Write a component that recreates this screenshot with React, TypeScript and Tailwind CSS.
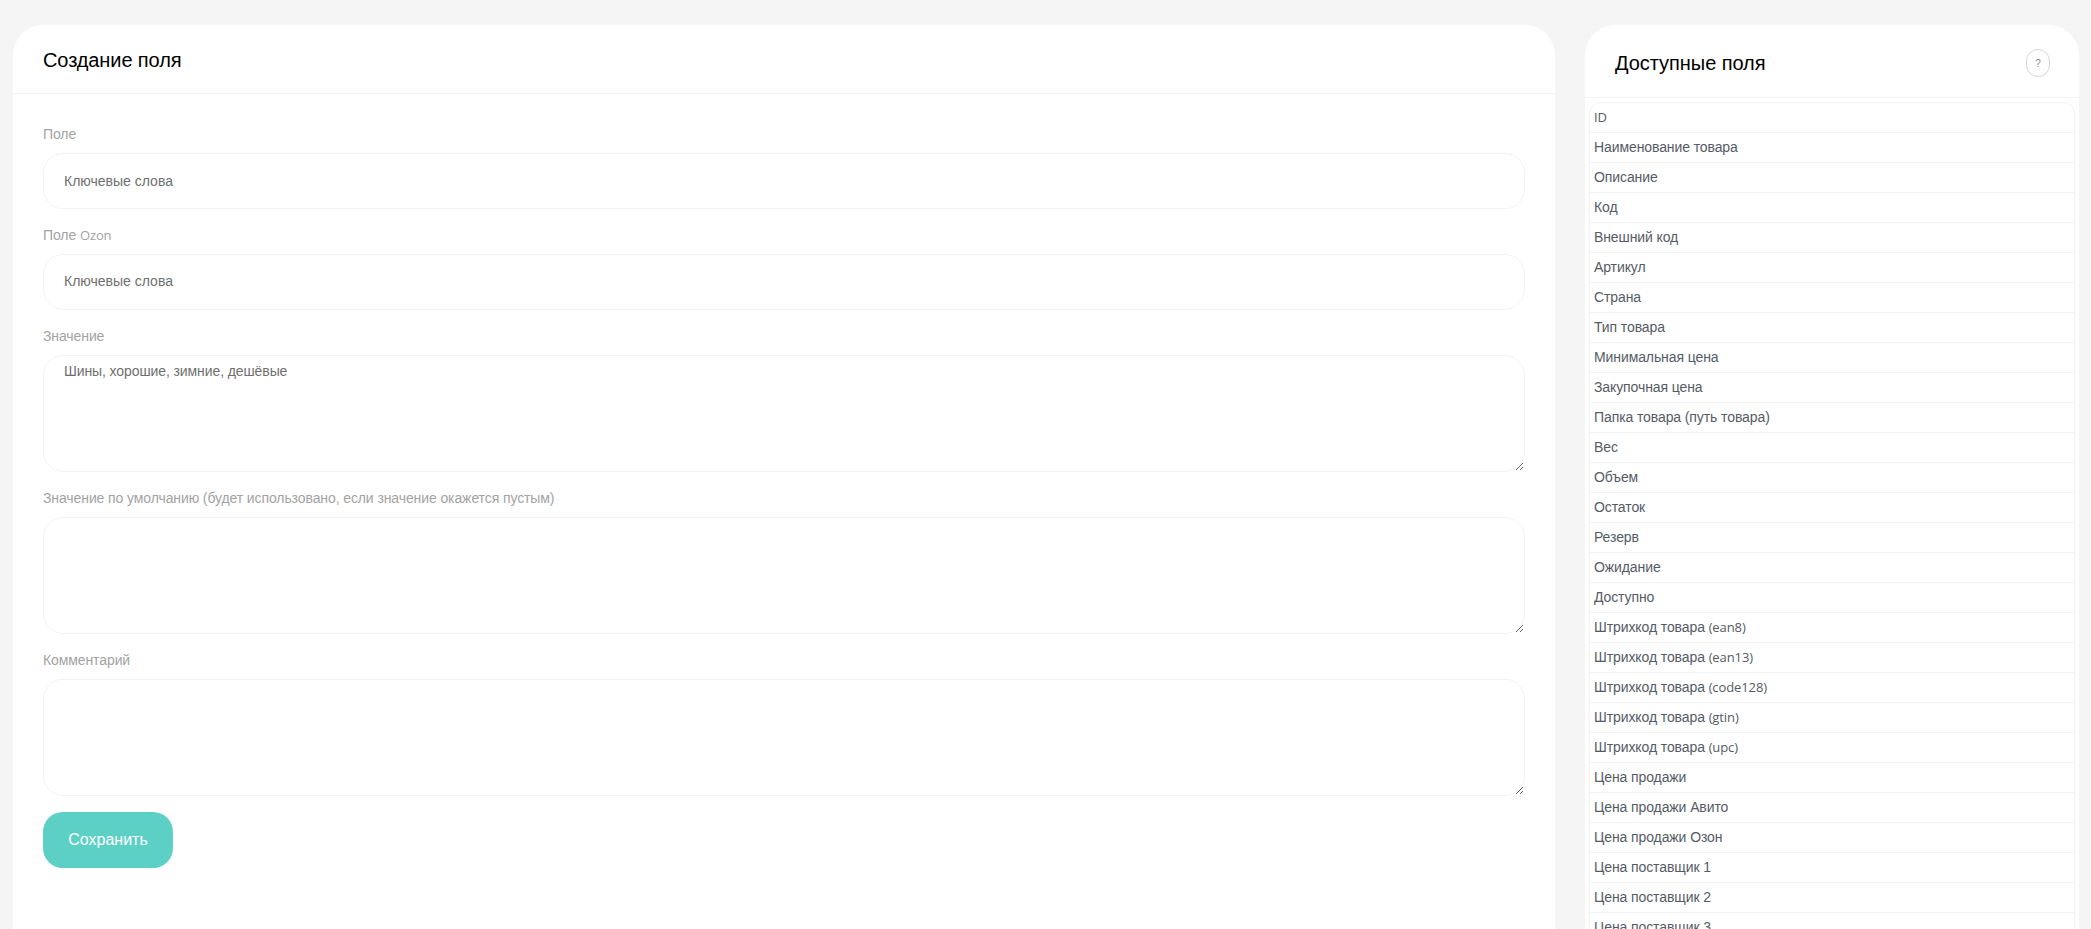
const fields: [string, string?][] = [
  ["", "ID"],
  ["Наименование товара"],
  ["Описание"],
  ["Код"],
  ["Внешний код"],
  ["Артикул"],
  ["Страна"],
  ["Тип товара"],
  ["Минимальная цена"],
  ["Закупочная цена"],
  ["Папка товара (путь товара)"],
  ["Вес"],
  ["Объем"],
  ["Остаток"],
  ["Резерв"],
  ["Ожидание"],
  ["Доступно"],
  ["Штрихкод товара ", "(ean8)"],
  ["Штрихкод товара ", "(ean13)"],
  ["Штрихкод товара ", "(code128)"],
  ["Штрихкод товара ", "(gtin)"],
  ["Штрихкод товара ", "(upc)"],
  ["Цена продажи"],
  ["Цена продажи Авито"],
  ["Цена продажи Озон"],
  ["Цена поставщик 1"],
  ["Цена поставщик 2"],
  ["Цена поставщик 3"],
];

function Label({ children }: { children: React.ReactNode }) {
  return (
    <label className="mb-[9px] block h-[20px] text-[14px] leading-[20px] tracking-[-0.1px] text-[#a3a3a3]">
      {children}
    </label>
  );
}

function Field({ label, value, inputClass }: { label: React.ReactNode; value: string; inputClass?: string }) {
  return (
    <div className="mb-[16px]">
      <Label>{label}</Label>
      <input
        readOnly
        value={value}
        className={`block h-[56px] w-full rounded-[20px] border border-[#f2f3f5] bg-white px-[20px] text-[14px] text-[#6f6f6f] outline-none ${inputClass ?? ""}`}
      />
    </div>
  );
}

function Area({ label, value, className }: { label: string; value?: string; className: string }) {
  return (
    <div className={className}>
      <Label>{label}</Label>
      <textarea
        readOnly
        value={value ?? ""}
        className="block h-[117px] w-full rounded-[20px] border border-[#f2f3f5] bg-white px-[20px] pt-[5px] text-[14px] leading-[20px] tracking-[-0.1px] text-[#6f6f6f] outline-none"
      />
    </div>
  );
}

export default function App() {
  return (
    <div className="flex h-[929px] items-start gap-[30px] overflow-hidden bg-[#f5f5f5] pt-[25px] pl-[13px] font-['Liberation_Sans',sans-serif]">
      {/* Создание поля */}
      <div className="min-h-[940px] w-[1542px] shrink-0 rounded-[30px] bg-white">
        <div className="flex h-[69px] items-center border-b border-[#f2f3f5] px-[30px] pt-[2px] text-[20px] tracking-[-0.1px] text-black">
          Создание поля
        </div>
        <div className="px-[30px] pt-[30px]">
          <Field label="Поле" value="Ключевые слова" />
          <Field
            label={
              <>
                Поле <span className="font-['Open_Sans',sans-serif] text-[13px]">Ozon</span>
              </>
            }
            value="Ключевые слова"
            inputClass="pb-[2px]"
          />
          <Area label="Значение" value="Шины, хорошие, зимние, дешёвые" className="mb-[16px]" />
          <Area
            label="Значение по умолчанию (будет использовано, если значение окажется пустым)"
            className="mb-[16px]"
          />
          <Area label="Комментарий" className="mb-[16px]" />
          <button className="h-[56px] w-[130px] rounded-[20px] bg-[#5dd0c6] text-[16px] text-white">Сохранить</button>
        </div>
      </div>

      {/* Доступные поля */}
      <div className="min-h-[940px] w-[494px] shrink-0 rounded-[30px] bg-white">
        <div className="flex h-[73px] items-center justify-between border-b border-[#f2f3f5] pt-[4px] pr-[29px] pl-[30px] text-[20px] tracking-[-0.05px] text-black">
          <span>Доступные поля</span>
          <button className="flex h-[28px] w-[24px] items-center justify-center rounded-[12px] border border-[#d6d6d6] text-[10px] text-[#8a8a8a]">
            ?
          </button>
        </div>
        <ul className="mx-[4px] mt-[4px] rounded-t-[12px] border border-b-0 border-[#f2f3f5]">
          {fields.map(([name, latin], i) => (
            <li
              key={i}
              className="flex h-[30px] items-center whitespace-pre border-b border-[#f2f3f5] pl-[4px] text-[14px] tracking-[-0.1px] text-[#555b66]"
            >
              {name}
              {latin && <span className="font-['Open_Sans',sans-serif] text-[13px]">{latin}</span>}
            </li>
          ))}
        </ul>
      </div>
    </div>
  );
}
